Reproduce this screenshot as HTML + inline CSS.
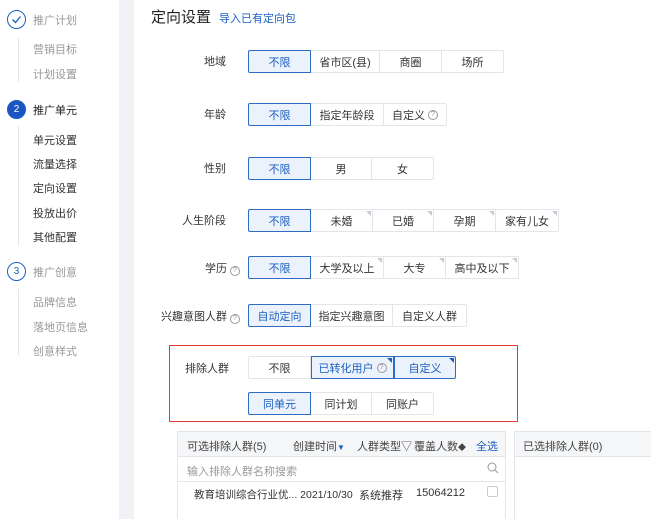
<!DOCTYPE html>
<html><head><meta charset="utf-8"><style>
*{margin:0;padding:0;box-sizing:border-box}
html,body{width:651px;height:519px;overflow:hidden}
body{background:#fff;font-family:"Liberation Sans","Noto Sans CJK SC",sans-serif;color:#333;position:relative;font-size:11px}
.a{position:absolute;white-space:nowrap}
.gs{position:absolute;left:119px;top:0;width:15px;height:519px;background:#f1f2f5}
.step{position:absolute;left:7px;width:19px;height:19px;border-radius:50%;border:1px solid #1b5fc1;color:#1b5fc1;font-size:10px;text-align:center;line-height:17px}
.vl{position:absolute;left:18px;width:1px;background:#e6e6e6}
.side{position:absolute;left:33px;font-size:11px;color:#999}
.dark{color:#333}
.lbl{position:absolute;font-size:11px;color:#333;text-align:right;white-space:nowrap}
.grp{position:absolute;display:flex;height:23px}
.b{height:23px;border:1px solid #e3e5e8;border-left:none;font-size:11px;color:#333;display:flex;align-items:center;justify-content:center;position:relative;white-space:nowrap}
.b:first-child{border-left:1px solid #e3e5e8;border-radius:2px 0 0 2px}
.b:last-child{border-radius:0 2px 2px 0}
.sel{background:#ebf2fc;border:1px solid #2e6bc2 !important;color:#1b5fc1}
.tri:after{content:"";position:absolute;right:1px;top:1px;border-top:5px solid #c8ccd2;border-left:5px solid transparent}
.seltri:after{border-top-color:#1b5fc1}
.q{display:inline-block;width:10px;height:10px;border:1px solid #999;border-radius:50%;font-size:7px;line-height:8px;text-align:center;color:#999;margin-left:3px}
</style></head><body>
<div class="gs"></div>
<div class="step" style="top:10px">
<svg width="17" height="17" viewBox="0 0 17 17"><path d="M4.5 8.5l3 3 5-6" fill="none" stroke="#1b5fc1" stroke-width="1.3"/></svg></div>
<div class="a" style="left:33px;top:12px;font-size:11px;color:#999">推广计划</div>
<div class="vl" style="top:38px;height:44px"></div>
<div class="side" style="top:41px">营销目标</div>
<div class="side" style="top:66px">计划设置</div>
<div class="step" style="top:100px;background:#1b55c4;color:#fff">2</div>
<div class="a" style="left:33px;top:102px;font-size:11px;color:#222">推广单元</div>
<div class="vl" style="top:126px;height:120px"></div>
<div class="side dark" style="top:132px">单元设置</div>
<div class="side dark" style="top:156px">流量选择</div>
<div class="side dark" style="top:180px">定向设置</div>
<div class="side dark" style="top:205px">投放出价</div>
<div class="side dark" style="top:229px">其他配置</div>
<div class="step" style="top:262px">3</div>
<div class="a" style="left:33px;top:264px;font-size:11px;color:#999">推广创意</div>
<div class="vl" style="top:289px;height:66px"></div>
<div class="side" style="top:294px">品牌信息</div>
<div class="side" style="top:319px">落地页信息</div>
<div class="side" style="top:343px">创意样式</div>

<div class="a" style="left:151px;top:6px;font-size:15px;color:#222">定向设置</div>
<div class="a" style="left:219px;top:10px;font-size:11px;color:#1b5fc1">导入已有定向包</div>

<div class="lbl" style="left:150px;width:76px;top:53px">地域</div>
<div class="grp" style="left:248px;top:50px"><div class="b sel" style="width:63px">不限</div><div class="b" style="width:69px">省市区(县)</div><div class="b" style="width:62px">商圈</div><div class="b" style="width:62px">场所</div></div>

<div class="lbl" style="left:150px;width:76px;top:106px">年龄</div>
<div class="grp" style="left:248px;top:103px"><div class="b sel" style="width:63px">不限</div><div class="b" style="width:73px">指定年龄段</div><div class="b" style="width:63px">自定义<span class="q">?</span></div></div>

<div class="lbl" style="left:150px;width:76px;top:160px">性别</div>
<div class="grp" style="left:248px;top:157px"><div class="b sel" style="width:63px">不限</div><div class="b" style="width:61px">男</div><div class="b" style="width:62px">女</div></div>

<div class="lbl" style="left:150px;width:76px;top:212px">人生阶段</div>
<div class="grp" style="left:248px;top:209px"><div class="b sel" style="width:63px">不限</div><div class="b tri" style="width:62px">未婚</div><div class="b tri" style="width:61px">已婚</div><div class="b tri" style="width:62px">孕期</div><div class="b tri" style="width:63px">家有儿女</div></div>

<div class="lbl" style="left:150px;width:90px;top:260px">学历<span class="q">?</span></div>
<div class="grp" style="left:248px;top:256px"><div class="b sel" style="width:63px">不限</div><div class="b tri" style="width:73px">大学及以上</div><div class="b tri" style="width:62px">大专</div><div class="b tri" style="width:73px">高中及以下</div></div>

<div class="lbl" style="left:150px;width:90px;top:308px">兴趣意图人群<span class="q">?</span></div>
<div class="grp" style="left:248px;top:304px"><div class="b sel" style="width:63px">自动定向</div><div class="b" style="width:82px">指定兴趣意图</div><div class="b" style="width:74px">自定义人群</div></div>

<div style="position:absolute;left:169px;top:345px;width:349px;height:77px;border:1px solid #e53935"></div>
<div class="lbl" style="left:185px;top:360px">排除人群</div>
<div class="grp" style="left:248px;top:356px"><div class="b" style="width:63px">不限</div><div class="b sel tri seltri" style="width:83px">已转化用户<span class="q">?</span></div><div class="b sel tri seltri" style="width:62px;border-left:none">自定义</div></div>
<div class="grp" style="left:248px;top:392px"><div class="b sel" style="width:63px">同单元</div><div class="b" style="width:61px">同计划</div><div class="b" style="width:62px">同账户</div></div>

<div class="a" style="left:177px;top:431px;width:329px;height:88px;border:1px solid #e3e5e8;border-bottom:none"></div>
<div class="a" style="left:177px;top:431px;width:329px;height:26px;background:#f5f6f8;border:1px solid #e3e5e8"></div>
<div class="a" style="left:187px;top:438px;color:#444">可选排除人群(5)</div>
<div class="a" style="left:293px;top:438px;color:#444">创建时间<span style="color:#1b5fc1;font-size:8px">▼</span></div>
<div class="a" style="left:357px;top:438px;color:#444">人群类型▽</div>
<div class="a" style="left:414px;top:438px;color:#444">覆盖人数<span style="font-size:8px">◆</span></div>
<div class="a" style="left:476px;top:438px;color:#1b5fc1">全选</div>
<div class="a" style="left:187px;top:463px;color:#999">输入排除人群名称搜索</div>
<svg class="a" style="left:487px;top:462px" width="12" height="12"><circle cx="5" cy="5" r="4" fill="none" stroke="#999"/><path d="M8 8l3 3" stroke="#999"/></svg>
<div class="a" style="left:177px;top:481px;width:329px;height:1px;background:#e3e5e8"></div>
<div class="a" style="left:194px;top:487px;color:#333;font-size:10.5px">教育培训综合行业优... 2021/10/30</div>
<div class="a" style="left:359px;top:487px;color:#333">系统推荐</div>
<div class="a" style="left:416px;top:487px;color:#333">15064212</div>
<div class="a" style="left:487px;top:486px;width:11px;height:11px;border:1px solid #ccc;border-radius:2px"></div>

<div class="a" style="left:514px;top:431px;width:140px;height:88px;border:1px solid #e3e5e8;border-right:none;border-bottom:none"></div>
<div class="a" style="left:514px;top:431px;width:140px;height:26px;background:#f5f6f8;border:1px solid #e3e5e8;border-right:none"></div>
<div class="a" style="left:523px;top:438px;color:#444">已选排除人群(0)</div>
</body></html>
